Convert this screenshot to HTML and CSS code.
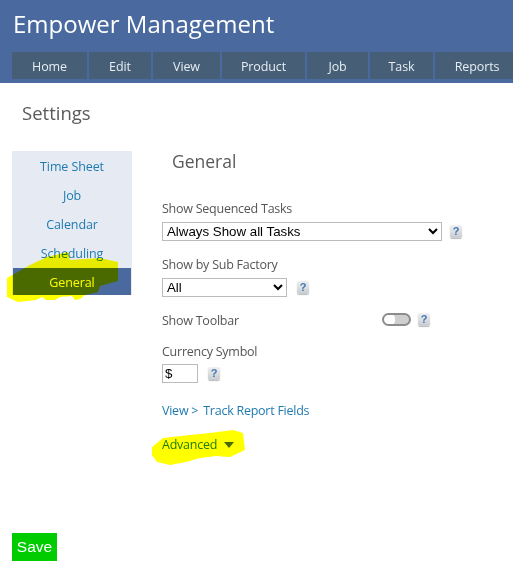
FILE: index.html
```html
<!DOCTYPE html>
<html lang="en">
<head>
    <meta charset="UTF-8">
    <meta name="viewport" content="width=device-width, initial-scale=1.0">
    <title>Empower Management</title>
    <link rel="stylesheet" href="styles.css">
</head>
<body>
    <header class="top">
        <div class="brand">Empower Management</div>
        <nav class="menu">
            <a class="m-home" href="#home">Home</a>
            <a class="m-edit" href="#edit">Edit</a>
            <a class="m-view" href="#view">View</a>
            <a class="m-product" href="#product">Product</a>
            <a class="m-job" href="#job">Job</a>
            <a class="m-task" href="#task">Task</a>
            <a class="m-reports" href="#reports">Reports</a>
        </nav>
    </header>

    <h1 class="page-title">Settings</h1>

    <div class="columns">
        <div class="side">
            <a href="#timesheet">Time Sheet</a>
            <a href="#job">Job</a>
            <a href="#calendar">Calendar</a>
            <a href="#scheduling">Scheduling</a>
            <a class="active" href="#general">General</a>
        </div>

        <div class="panel">
            <h2>General</h2>

            <div class="field f-seq">
                <label>Show Sequenced Tasks</label>
                <div class="row">
                    <select class="sel-wide"><option>Always Show all Tasks</option></select>
                    <span class="help">?</span>
                </div>
            </div>

            <div class="field f-sub">
                <label>Show by Sub Factory</label>
                <div class="row">
                    <select class="sel-small"><option>All</option></select>
                    <span class="help">?</span>
                </div>
            </div>

            <div class="toolbar-row">
                <label>Show Toolbar</label>
                <span class="toggle"></span>
                <span class="help">?</span>
            </div>

            <div class="field f-cur">
                <label>Currency Symbol</label>
                <div class="row">
                    <input class="cur" type="text" value="$">
                    <span class="help">?</span>
                </div>
            </div>

            <div class="links"><a href="#view">View &gt;</a><a class="track" href="#fields">Track Report Fields</a></div>

            <div class="advanced"><a href="#advanced">Advanced</a><span class="arrow"></span></div>
        </div>
    </div>

    <button class="save" type="button">Save</button>

    <!-- marker scribbles on top of the screenshot -->
    <svg class="marker marker-side" width="120" height="60" viewBox="0 0 120 60">
        <path d="M68 7 L70 15 L100 13 L118 17 L118 36 L100 41 L98 47 L85 50 L80 54 L75 55 L72 51 L60 52 L55 55 L46 55 L42 52 L36 55 L18 57 L7 52 L7 33 L30 20 L47 12 Z" fill="#ffff00"/>
    </svg>
    <svg class="marker marker-adv" width="100" height="40" viewBox="0 0 100 40">
        <path d="M2 18 L13 9 L40 6 L60 4 L83 1 L93 4 L95 21 L80 28 L66 27 L50 29 L36 33 L20 36 L7 33 L2 26 Z" fill="#ffff00"/>
    </svg>
</body>
</html>
```

FILE: styles.css
```css
body {
    margin: 0;
    padding: 0;
    font-family: "Open Sans", "Noto Sans", sans-serif;
    font-size: 12px;
    color: #555;
    background-color: #fff;
    position: relative;
    overflow: hidden;
    height: 583px;
}
a {
    color: #1f7ab0;
    text-decoration: none;
}
.top {
    height: 83px;
    background-color: #4a6a9f;
    padding-left: 12px;
    overflow: hidden;
}
.brand {
    color: #fff;
    font-size: 24px;
    line-height: 32px;
    height: 52px;
    padding: 8px 0 0 1px;
    box-sizing: border-box;
    white-space: nowrap;
}
.menu {
    display: flex;
    gap: 2px;
    width: 520px;
}
.menu a {
    display: block;
    height: 27px;
    line-height: 29px;
    background-color: #465e76;
    color: #e6edf3;
    text-align: center;
    font-size: 12.5px;
    letter-spacing: -0.1px;
}
.m-home { width: 75px; }
.m-edit { width: 62px; }
.m-view { width: 67px; }
.m-product { width: 83px; }
.m-job { width: 61px; }
.m-task { width: 63px; }
.m-reports { width: 84px; }
.page-title {
    margin: 0;
    padding: 17px 0 0 22px;
    height: 51px;
    box-sizing: border-box;
    font-size: 18.5px;
    line-height: 26px;
    font-weight: normal;
    color: #5a5a5a;
}
.columns {
    display: flex;
    padding-left: 12px;
    margin-top: 17px;
}
.side {
    width: 120px;
    height: 144px;
    background-color: #e6ebf3;
    flex-shrink: 0;
    display: flex;
    flex-direction: column;
    padding: 0 1px 1px;
    box-sizing: border-box;
}
.side a {
    display: block;
    height: 29px;
    line-height: 31px;
    text-align: center;
    font-size: 12.5px;
    letter-spacing: -0.1px;
}
.side a.active {
    height: 27px;
    line-height: 30px;
    margin-top: 1px;
    background-color: #4a6a9f;
    color: #fff;
}
.panel {
    margin-left: 30px;
    flex-grow: 1;
}
.panel h2 {
    margin: -1px 0 0 10px;
    height: 50px;
    font-size: 17.5px;
    line-height: 22px;
    font-weight: normal;
    color: #5a5a5a;
}
.field label, .toolbar-row label {
    display: block;
    font-size: 12.5px;
    line-height: 17px;
    letter-spacing: -0.25px;
}
.row {
    display: flex;
    align-items: center;
    margin-top: 5px;
}
.f-sub {
    margin-top: 15px;
}
.f-cur {
    margin-top: 12px;
}
.f-cur .row {
    margin-top: 4px;
}
select {
    height: 19px;
    box-sizing: border-box;
    border: 1px solid #bbb;
    background-color: #fff;
    color: #000;
    font-family: "Liberation Sans", sans-serif;
    font-size: 13.3px;
    padding: 0;
    border-radius: 0;
}
.sel-wide {
    width: 280px;
}
.sel-small {
    width: 125px;
}
.help {
    display: block;
    width: 12px;
    height: 13px;
    margin-left: 8px;
    border-radius: 2px;
    background: linear-gradient(#f0f0f0, #c8ccd0);
    box-shadow: 0 1px 1px #bbb;
    color: #3f78b5;
    font-family: "Liberation Sans", sans-serif;
    font-size: 11px;
    font-weight: bold;
    line-height: 13px;
    text-align: center;
}
.f-sub .help {
    margin-left: 10px;
}
.toolbar-row {
    display: flex;
    align-items: center;
    margin-top: 14px;
    height: 20px;
}
.toolbar-row label {
    width: 220px;
    margin-top: -2px;
}
.toggle {
    display: block;
    width: 29px;
    height: 13px;
    box-sizing: border-box;
    margin-top: -4px;
    border: 2px solid #8c8c8c;
    border-radius: 7px;
    background: radial-gradient(circle at 5px 50%, #fff 6px, #cfcfcf 6.5px);
}
.toolbar-row .help {
    margin-top: -3px;
    margin-left: 7px;
}
.cur {
    width: 36px;
    height: 19px;
    box-sizing: border-box;
    border: 1px solid #bbb;
    padding: 0 0 0 2px;
    font-family: "Liberation Sans", sans-serif;
    font-size: 13.3px;
    color: #000;
}
.f-cur .help {
    margin-left: 10px;
}
.links {
    margin-top: 19px;
    font-size: 12.5px;
    line-height: 17px;
    letter-spacing: -0.25px;
}
.track {
    margin-left: 5px;
}
.advanced {
    display: flex;
    align-items: center;
    margin-top: 17px;
    font-size: 12.5px;
    line-height: 17px;
    letter-spacing: -0.25px;
}
.arrow {
    display: block;
    margin-left: 7px;
    border-left: 5px solid transparent;
    border-right: 5px solid transparent;
    border-top: 6px solid #4a6a9f;
}
.save {
    position: absolute;
    left: 12px;
    top: 533px;
    width: 45px;
    height: 28px;
    padding: 0;
    border: none;
    background-color: #00cc00;
    color: #fff;
    font-family: "Liberation Sans", sans-serif;
    font-size: 15.5px;
}
.marker {
    position: absolute;
    mix-blend-mode: multiply;
}
.marker-side {
    left: 0;
    top: 245px;
}
.marker-adv {
    left: 150px;
    top: 429px;
}
```
